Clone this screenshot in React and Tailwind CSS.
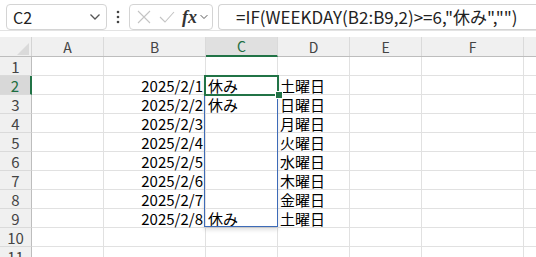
import React from "react";

const cols = [
  { key: "A", w: "w-[72px]" },
  { key: "B", w: "w-[102px]" },
  { key: "C", w: "w-[72px]" },
  { key: "D", w: "w-[72px]" },
  { key: "E", w: "w-[72px]" },
  { key: "F", w: "w-[102px]" },
  { key: "G", w: "w-[60px]", hide: true },
];

const data = {
  2: { B: "2025/2/1", C: "休み", D: "土曜日" },
  3: { B: "2025/2/2", C: "休み", D: "日曜日" },
  4: { B: "2025/2/3", D: "月曜日" },
  5: { B: "2025/2/4", D: "火曜日" },
  6: { B: "2025/2/5", D: "水曜日" },
  7: { B: "2025/2/6", D: "木曜日" },
  8: { B: "2025/2/7", D: "金曜日" },
  9: { B: "2025/2/8", C: "休み", D: "土曜日" },
};

const font = { fontFamily: '"Noto Sans CJK JP", "Noto Sans", sans-serif' };

function Chevron({ className }) {
  return (
    <svg className={className} width="12" height="8" viewBox="0 0 12 8" fill="none">
      <path d="M1.5 1.5 L6 6 L10.5 1.5" stroke="#555" strokeWidth="1.3" />
    </svg>
  );
}

export default function App() {
  const rows = [1, 2, 3, 4, 5, 6, 7, 8, 9, 10, 11];
  return (
    <div
      className="w-[536px] h-[257px] overflow-hidden bg-white relative text-[#000]"
      style={font}
    >
      {/* Formula bar */}
      <div className="h-[31px] flex items-center border-b border-[#e3e3e3] pl-[6px] gap-0">
        <div className="w-[101px] h-[26px] mt-[3px] rounded-[4px] border border-[#d4d4d4] bg-white flex items-center justify-between pl-[6px] pr-[5px]">
          <span className="text-[16px] leading-none text-[#222]">C2</span>
          <Chevron />
        </div>
        <div className="w-[22px] flex justify-center mt-[3px]">
          <svg width="4" height="14" viewBox="0 0 4 14">
            <circle cx="2" cy="2" r="1.3" fill="#444" />
            <circle cx="2" cy="7" r="1.3" fill="#444" />
            <circle cx="2" cy="12" r="1.3" fill="#444" />
          </svg>
        </div>
        <div className="w-[84px] h-[26px] mt-[3px] rounded-[4px] border border-[#d4d4d4] bg-white flex items-center pl-[6px]">
          <svg width="16" height="16" viewBox="0 0 16 16">
            <path d="M2 2 L14 14 M14 2 L2 14" stroke="#c4c4c4" strokeWidth="1.1" />
          </svg>
          <svg width="18" height="16" viewBox="0 0 18 16" className="ml-[6px]">
            <path d="M2 8 L7 13 L16 3" stroke="#c4c4c4" strokeWidth="1.1" fill="none" />
          </svg>
          <span
            className="ml-[6px] text-[18px] italic font-bold leading-none text-[#333]"
            style={{ fontFamily: '"Liberation Serif", serif' }}
          >
            fx
          </span>
          <Chevron className="ml-[1px] scale-75" />
        </div>
        <div className="flex-1 h-[26px] mt-[3px] ml-[5px] rounded-l-[4px] border border-r-0 border-[#d4d4d4] bg-white flex items-center pl-[17px]">
          <span className="text-[17px] leading-none text-[#222] whitespace-nowrap">
            =IF(WEEKDAY(B2:B9,2)&gt;=6,"休み","")
          </span>
        </div>
      </div>

      {/* Grid */}
      <div className="mt-[6px] relative">
        {/* Header row */}
        <div className="flex h-[20px] bg-[#f0f0f0] border-b border-[#bdbdbd]">
          <div className="w-[32px] shrink-0 border-r border-[#d4d4d4] relative">
            <svg className="absolute left-[17px] top-[6px]" width="12" height="12" viewBox="0 0 12 12">
              <path d="M12 0 L12 12 L0 12 Z" fill="#dadada" />
            </svg>
          </div>
          {cols.map((c) => (
            <div
              key={c.key}
              className={`${c.w} shrink-0 border-r border-[#dadada] flex items-center justify-center text-[14px] leading-none ${
                c.key === "C"
                  ? "bg-[#e0e0e0] text-[#1e6e42] border-b-2 border-b-[#217346] -mb-[1px]"
                  : "text-[#444]"
              }`}
            >
              {c.hide ? "" : c.key}
            </div>
          ))}
        </div>
        {rows.map((r) => (
          <div key={r} className="flex h-[19px]">
            <div
              className={`w-[32px] shrink-0 border-b border-b-[#dadada] flex items-center justify-center text-[15px] leading-none ${
                r === 2
                  ? "bg-[#d8d8d8] border-r-2 border-r-[#217346] text-[#1e6e42]"
                  : "bg-[#f0f0f0] border-r border-r-[#bdbdbd] text-[#444]"
              }`}
            >
              {r}
            </div>
            {cols.map((c) => {
              const v = data[r] && data[r][c.key];
              return (
                <div
                  key={c.key}
                  className={`${c.w} shrink-0 border-r border-b border-[#e1e1e1] flex items-center text-[15px] leading-none whitespace-nowrap overflow-visible ${
                    c.key === "B" ? "justify-end pr-[2px]" : "pl-[2px]"
                  }`}
                >
                  {v || ""}
                </div>
              );
            })}
          </div>
        ))}

        {/* Blue range C2:C9 */}
        <div className="absolute left-[204px] top-[38px] w-[74px] h-[152px] border border-[#3d6bb8] shadow-[0_3px_4px_rgba(0,0,0,0.12)] pointer-events-none" />
        {/* Active cell C2 */}
        <div className="absolute left-[204px] top-[38px] w-[75px] h-[21px] border-2 border-[#217346] pointer-events-none" />
        <div className="absolute left-[275px] top-[54px] w-[6px] h-[6px] bg-[#217346] border border-white box-content pointer-events-none" />
      </div>
    </div>
  );
}
